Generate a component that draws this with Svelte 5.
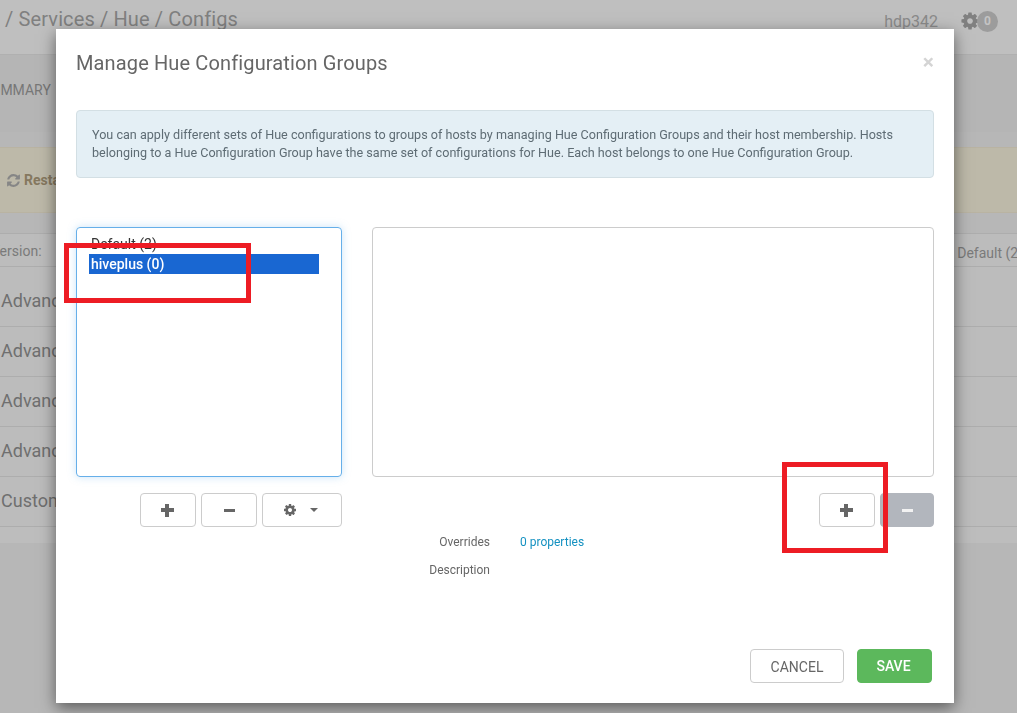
<script>
  const rows = ['Advanced hue-desktop', 'Advanced hue-ini', 'Advanced hue-log4j', 'Advanced hue-oozie', 'Custom hue-site'];
  const cog = 'M1152 896q0-106-75-181t-181-75-181 75-75 181 75 181 181 75 181-75 75-181zm512-109v222q0 12-8 23t-20 13l-185 28q-19 54-39 91 35 50 107 138 10 12 10 25t-9 23q-27 37-99 108t-94 71q-12 0-26-9l-138-108q-44 23-91 38-16 136-29 186-7 28-36 28h-222q-14 0-24.500-8.500t-11.500-21.500l-28-184q-49-16-90-37l-141 107q-10 9-25 9-14 0-25-11-126-114-165-168-7-10-7-23 0-12 8-23 15-21 51-66.500t54-70.500q-27-50-41-99l-183-27q-13-2-21-12.500t-8-23.500v-222q0-12 8-23t19-13l186-28q14-46 39-92-40-57-107-138-10-12-10-24 0-10 9-23 26-36 98.500-107.500t94.500-71.500q13 0 26 10l138 107q44-23 91-38 16-136 29-186 7-28 36-28h222q14 0 24.500 8.500t11.500 21.500l28 184q49 16 90 37l142-107q9-9 24-9 13 0 25 10 129 119 165 170 7 8 7 22 0 12-8 23-15 21-51 66.500t-54 70.500q26 50 41 98l183 28q13 2 21 12.500t8 23.500z';
  const refresh = 'M1639 1056q0 5-1 7-64 268-268 434.500t-478 166.500q-146 0-282.500-55t-243.500-157l-129 129q-19 19-45 19t-45-19-19-45v-448q0-26 19-45t45-19h448q26 0 45 19t19 45-19 45l-137 137q71 66 161 102t187 36q134 0 250-65t186-179q11-17 53-117 8-23 30-23h192q13 0 22.500 9.500t9.500 22.500zm25-800v448q0 26-19 45t-45 19h-448q-26 0-45-19t-19-45 19-45l138-138q-148-137-349-137-134 0-250 65t-186 179q-11 17-53 117-8 23-30 23h-199q-13 0-22.500-9.500t-9.500-22.500v-7q65-268 270-434.500t480-166.500q146 0 284 55.500t245 156.500l130-129q19-19 45-19t45 19 19 45z';
</script>

<div class="page">
  <header class="top">
    <div class="crumbs"><span class="lead">r</span> / Services / Hue / Configs</div>
    <div class="cluster">
      <span class="host">hdp342</span>
      <svg class="top-cog" viewBox="0 0 1792 1792"><path d={cog} /></svg>
      <span class="badge">0</span>
    </div>
  </header>
  <nav class="tabs"><span class="tab">SUMMARY</span></nav>
  <div class="restart">
    <svg class="refresh" viewBox="0 0 1792 1792"><path d={refresh} /></svg>
    <strong>Restart</strong>
  </div>
  <div class="version"><span class="ver-l">Version:</span><span class="ver-r">Default (2)</span></div>
  {#each rows as row}
    <div class="row"><span>{row}</span></div>
  {/each}
  <div class="foot"></div>
</div>

<div class="overlay">
  <div class="modal">
    <div class="head">
      <h1>Manage Hue Configuration Groups</h1>
      <span class="close">×</span>
    </div>
    <div class="alert">You can apply different sets of Hue configurations to groups of hosts by managing Hue Configuration Groups and their host membership. Hosts belonging to a Hue Configuration Group have the same set of configurations for Hue. Each host belongs to one Hue Configuration Group.</div>
    <div class="columns">
      <div class="left">
        <div class="list focus">
          <div class="opt">Default (2)</div>
          <div class="opt sel">hiveplus (0)</div>
        </div>
        <div class="btns">
          <button class="ic"><span class="plus"></span></button>
          <button class="ic"><span class="minus"></span></button>
          <button class="ic gear">
            <svg class="btn-cog" viewBox="0 0 1792 1792"><path d={cog} /></svg>
            <span class="caret"></span>
          </button>
        </div>
      </div>
      <div class="right">
        <div class="list"></div>
        <div class="btns">
          <button class="ic"><span class="plus"></span></button>
          <button class="ic off"><span class="minus"></span></button>
        </div>
        <dl class="props">
          <dt>Overrides</dt><dd><span class="link">0 properties</span></dd>
          <dt>Description</dt><dd></dd>
        </dl>
      </div>
    </div>
    <div class="actions">
      <button class="cancel">CANCEL</button>
      <button class="save">SAVE</button>
    </div>
  </div>
  <div class="mark mark-a"></div>
  <div class="mark mark-b"></div>
</div>

<style>
  :global(body) { margin: 0; background: #b7b7b7; overflow: hidden; font-family: Roboto, "Liberation Sans", sans-serif; }
  .page { height: 713px; overflow: hidden; background: #b7b7b7; color: #717171; }
  .top { box-sizing: border-box; border-bottom: 1px solid #b0b0b0; background: #bfbfbf; height: 55px; display: flex; justify-content: space-between; padding-right: 19px; }
  .crumbs { font-size: 20px; line-height: 38px; color: #808080; white-space: nowrap; margin-left: -7px; letter-spacing: .13px; }
  .lead { color: #6f8c9c; }
  .cluster { display: flex; align-items: center; height: 42px; color: #8a8a8a; }
  .host { font-size: 16px; margin-right: 22px; }
  .top-cog { width: 20px; height: 20px; fill: #808080; margin-right: -3px; }
  .badge { width: 21px; height: 21px; border-radius: 50%; background: #9c9c9c; color: #c4c4c4; font-size: 12px; font-weight: 700; line-height: 21px; text-align: center; }
  .tabs { height: 77px; background: #b5b5b5; font-size: 14px; }
  .tab { display: block; margin-left: -17px; padding-top: 27px; line-height: 16px; color: #777; }
  .restart { margin-top: 15px; height: 66px; box-sizing: border-box; background: #bdb9a9; border-block: 1px solid #b9b3a2; display: flex; align-items: center; padding-left: 6px; gap: 3px; font-size: 14px; color: #85785f; }
  .refresh { width: 15px; height: 15px; fill: #868686; }
  .version { margin-top: 20px; height: 34px; box-sizing: border-box; border-block: 1px solid #adadad; background: #bcbcbc; display: flex; justify-content: space-between; font-size: 14px; color: #7a7a7a; white-space: nowrap; overflow: hidden; }
  .ver-l { margin-left: -9px; line-height: 34px; }
  .ver-r { margin-right: -6px; line-height: 38px; }
  .row { height: 50px; box-sizing: border-box; border-bottom: 1px solid #adadad; background: #bcbcbc; display: flex; align-items: center; padding-left: 1px; padding-bottom: 2px; font-size: 18px; color: #6f6f6f; white-space: nowrap; }
  .version + .row { height: 60px; padding-top: 8px; padding-bottom: 0; }
  .foot { height: 16px; background: #bdbdbd; }

  .overlay { position: fixed; inset: 0; }
  .modal { position: absolute; left: 56px; top: 29px; width: 898px; height: 674px; box-sizing: border-box; padding: 0 20px; background: #fff; box-shadow: 0 5px 15px rgba(0,0,0,.5); display: flex; flex-direction: column; color: #666; }
  .head { display: flex; justify-content: space-between; align-items: center; height: 66px; padding-top: 1px; box-sizing: border-box; }
  h1 { margin: 0; font-size: 20px; font-weight: 400; color: #666; letter-spacing: .13px; }
  .close { font-size: 21px; font-weight: 700; color: #d4d4d4; line-height: 1; }
  .alert { margin-top: 15px; height: 68px; box-sizing: border-box; padding: 15px; font-size: 12.6px; line-height: 18px; background: #e4eff5; border: 1px solid #d3dfe4; border-radius: 4px; color: #5e6c74; }
  .columns { display: flex; gap: 30px; margin-top: 49px; }
  .left { width: 266px; flex: none; }
  .right { flex: 1; }
  .list { height: 250px; box-sizing: border-box; border: 1px solid #ccc; border-radius: 4px; padding: 6px 12px; font-size: 14px; line-height: 20px; color: #333; }
  .focus { border-color: #66afe9; box-shadow: 0 0 8px rgba(102,175,233,.35); }
  .opt { padding-left: 2px; height: 20px; width: 228px; }
  .sel { background: #1967d2; color: #fff; font-weight: 500; }
  .btns { display: flex; justify-content: flex-end; gap: 5px; margin-top: 16px; }
  button { font-family: inherit; cursor: default; margin: 0; padding: 0; }
  .ic { width: 56px; height: 34px; background: #fff; border: 1px solid #ccc; border-radius: 4px; display: flex; align-items: center; justify-content: center; }
  .ic.off { width: 54px; background: #b2b6bd; border-color: #b2b6bd; }
  .plus { width: 13px; height: 13px; margin-left: -2px; background: linear-gradient(#666,#666) center / 100% 4px no-repeat, linear-gradient(#666,#666) center / 4px 100% no-repeat; }
  .minus { width: 11px; height: 3px; background: #666; }
  .off .minus { background: #f2f2f2; }
  .gear { width: 80px; gap: 13px; padding-right: 4px; box-sizing: border-box; }
  .btn-cog { width: 14px; height: 14px; fill: #666; }
  .caret { width: 0; height: 0; border-left: 4px solid transparent; border-right: 4px solid transparent; border-top: 4px solid #666; }
  .props { display: grid; grid-template-columns: 118px 1fr; column-gap: 30px; margin: 1px 0 0; font-size: 12px; line-height: 28px; }
  .props dt { text-align: right; color: #666; }
  .props dd { margin: 0; min-height: 28px; }
  .link { color: #1491c1; }
  .actions { position: absolute; right: 22px; bottom: 20px; display: flex; gap: 13px; }
  .cancel, .save { height: 34px; border-radius: 4px; font-size: 14px; }
  .cancel { width: 94px; background: #fff; border: 1px solid #ccc; color: #666; padding-top: 2px; }
  .save { width: 75px; background: #5cb85c; border: 1px solid #5cb85c; color: #fff; font-weight: 500; padding-right: 2px; }
  .mark { position: absolute; box-sizing: border-box; border: 5px solid #ed1c24; }
  .mark-a { left: 64px; top: 243px; width: 187px; height: 60px; }
  .mark-b { left: 782px; top: 462px; width: 106px; height: 91px; }
</style>
